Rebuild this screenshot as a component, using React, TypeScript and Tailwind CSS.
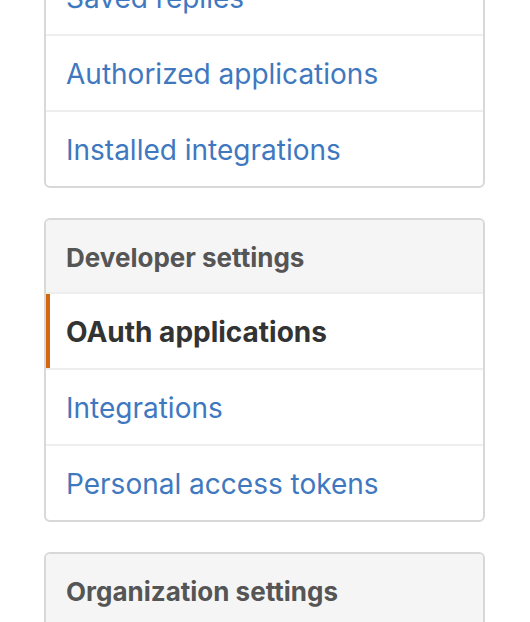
const groups = [
  {
    heading: null as string | null,
    items: ["Saved replies", "Authorized applications", "Installed integrations"],
    active: "",
  },
  {
    heading: "Developer settings",
    items: ["OAuth applications", "Integrations", "Personal access tokens"],
    active: "OAuth applications",
  },
  {
    heading: "Organization settings",
    items: ["Organizations"],
    active: "",
  },
];

function Menu({
  heading,
  items,
  active,
}: {
  heading: string | null;
  items: string[];
  active: string;
}) {
  return (
    <nav className="mb-[30px] rounded-[6px] border-2 border-[#d8d8d8] bg-white overflow-hidden">
      {heading && (
        <h3 className="h-[72px] flex items-center px-[20px] pt-[2px] bg-[#f5f5f5] text-[#555] font-bold text-[26px]">
          {heading}
        </h3>
      )}
      {items.map((item, i) => {
        const selected = item === active;
        const divided = heading !== null || i > 0;
        return (
          <a
            key={item}
            href="#"
            className={
              "relative flex items-center px-[20px] pt-[2px] text-[28px] " +
              (divided ? "h-[76px] border-t-2 border-[#eeeeee] " : "h-[74px] ") +
              (selected ? "text-[#333] font-bold" : "text-[#4078c0]")
            }
          >
            {selected && (
              <span className="absolute left-0 top-0 bottom-0 w-[4px] bg-[#d26911]" />
            )}
            {item}
          </a>
        );
      })}
    </nav>
  );
}

export default function App() {
  return (
    <div
      className="w-[530px] h-[622px] overflow-hidden bg-white"
      style={{ fontFamily: "Inter, 'Helvetica Neue', Arial, sans-serif" }}
    >
      <div className="ml-[44px] w-[441px] mt-[-42px]">
        {groups.map((g) => (
          <Menu key={g.items[0]} heading={g.heading} items={g.items} active={g.active} />
        ))}
      </div>
    </div>
  );
}
